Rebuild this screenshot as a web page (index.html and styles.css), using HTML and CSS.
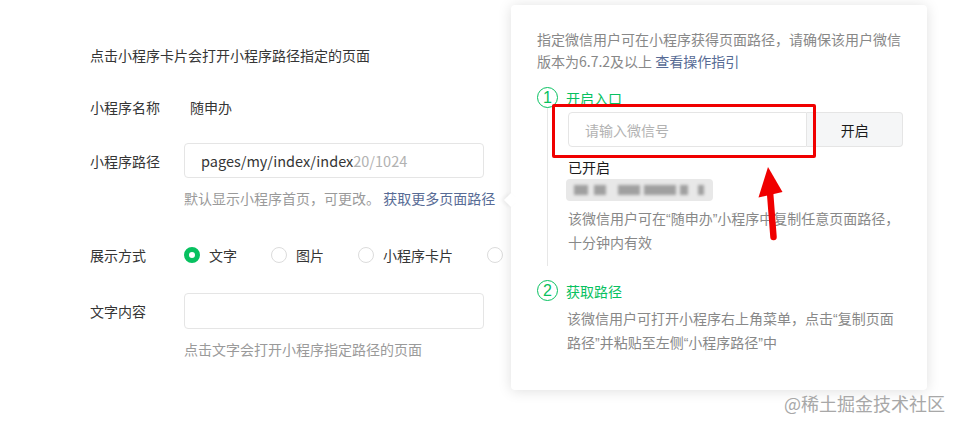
FILE: index.html
```html
<!DOCTYPE html>
<html lang="zh-CN">
<head>
  <meta charset="UTF-8">
  <meta name="viewport" content="width=device-width, initial-scale=1.0">
  <title>插入小程序</title>
  <link rel="stylesheet" href="styles.css">
</head>
<body>
  <div class="page">
    <div class="form">
      <p class="intro">点击小程序卡片会打开小程序路径指定的页面</p>

      <div class="row row-name">
        <span class="label">小程序名称</span>
        <span class="value">随申办</span>
      </div>

      <div class="row row-input">
        <span class="label">小程序路径</span>
        <div class="input">
          <span class="input-text">pages/my/index/index</span><span class="counter">20/1024</span>
        </div>
      </div>
      <p class="hint">默认显示小程序首页，可更改。 <a class="link" href="#">获取更多页面路径</a></p>

      <div class="row row-radio">
        <span class="label">展示方式</span>
        <div class="radios">
          <label class="radio checked"><i class="dot"></i>文字</label>
          <label class="radio"><i class="dot"></i>图片</label>
          <label class="radio"><i class="dot"></i>小程序卡片</label>
          <label class="radio"><i class="dot"></i>图文</label>
        </div>
      </div>

      <div class="row row-input row-text">
        <span class="label">文字内容</span>
        <div class="input"></div>
      </div>
      <p class="hint">点击文字会打开小程序指定路径的页面</p>
    </div>

    <div class="popover">
      <i class="popover-arrow"></i>
      <p class="pop-desc">指定微信用户可在小程序获得页面路径，请确保该用户微信<br>版本为6.7.2及以上 <a class="link" href="#">查看操作指引</a></p>

      <div class="step">
        <div class="step-head">
          <span class="step-num">1</span>
          <span class="step-title">开启入口</span>
        </div>
        <div class="step-body step-body-line">
          <div class="open-row">
            <div class="wx-input">请输入微信号</div>
            <button class="open-btn" type="button">开启</button>
          </div>
          <p class="opened">已开启</p>
          <div class="blurred">
            <i style="left:8px;width:14px"></i>
            <i style="left:28px;width:12px"></i>
            <i style="left:52px;width:22px"></i>
            <i style="left:78px;width:32px"></i>
            <i style="left:114px;width:8px"></i>
            <i style="left:132px;width:6px"></i>
          </div>
          <p class="step-desc">该微信用户可在<q>“</q>随申办<q>”</q>小程序中复制任意页面路径，<br>十分钟内有效</p>
        </div>
      </div>

      <div class="step step-2">
        <div class="step-head">
          <span class="step-num">2</span>
          <span class="step-title">获取路径</span>
        </div>
        <div class="step-body">
          <p class="step-desc">该微信用户可打开小程序右上角菜单，点击<q>“</q>复制页面<br>路径<q>”</q>并粘贴至左侧<q>“</q>小程序路径<q>”</q>中</p>
        </div>
      </div>
    </div>

    <div class="mark-box"></div>
    <svg class="mark-arrow" width="40" height="85" viewBox="0 0 40 85">
      <path d="M20 32 L23.5 77" stroke="#f00000" stroke-width="6.5" stroke-linecap="round" fill="none"/>
      <path d="M18 7 L8.5 37.5 L32.5 32 Z" fill="#f00000"/>
    </svg>

    <div class="watermark">@稀土掘金技术社区</div>
  </div>
</body>
</html>
```

FILE: styles.css
```css
* {
  box-sizing: border-box;
}

body {
  margin: 0;
  background: #fff;
  font-family: "Noto Sans CJK SC", "Noto Sans", sans-serif;
  font-size: 14px;
  color: #353535;
}

p {
  margin: 0;
}

q {
  quotes: none;
  font-family: "Liberation Sans", sans-serif;
}

.link {
  color: #576b95;
  text-decoration: none;
}

.page {
  position: relative;
  width: 960px;
  height: 430px;
  overflow: hidden;
}

.form {
  width: 484px;
  padding: 45px 0 0 90px;
  line-height: 20px;
}

.intro {
  margin-bottom: 32px;
}

.row {
  display: flex;
  align-items: center;
}

.label {
  width: 94px;
  flex: none;
}

.value {
  padding-left: 6px;
}

.row-input {
  margin-top: 26px;
}

.input {
  width: 300px;
  height: 35px;
  border: 1px solid #e5e5e5;
  border-radius: 4px;
  padding: 0 16px;
  display: flex;
  align-items: center;
  font-size: 14.5px;
}

.input-text {
  color: #353535;
}

.counter {
  color: #b2b2b2;
}

.row-text {
  margin-top: 28px;
}

.row-text .input {
  height: 36px;
}

.hint {
  margin: 10px 0 0 94px;
  color: #9a9a9a;
  white-space: nowrap;
}

.row-radio {
  margin-top: 37px;
}

.radios {
  display: flex;
  gap: 34px;
  white-space: nowrap;
}

.radio {
  display: flex;
  align-items: center;
  gap: 9px;
}

.dot {
  width: 16px;
  height: 16px;
  border-radius: 50%;
  border: 1px solid #dcdcdc;
  background: #fff;
}

.radio.checked .dot {
  border: 5.5px solid #07c160;
  background: #fff;
}

/* popover */
.popover {
  position: absolute;
  left: 511px;
  top: 5px;
  width: 416px;
  height: 385px;
  background: #fff;
  border-radius: 4px;
  box-shadow: 0 1px 14px rgba(0, 0, 0, 0.13);
  padding: 23px 24px 0 26px;
}

.popover-arrow {
  position: absolute;
  left: -5px;
  top: 190px;
  width: 10px;
  height: 10px;
  background: #fff;
  transform: rotate(45deg);
  box-shadow: -2px 2px 4px rgba(0, 0, 0, 0.06);
}

.pop-desc {
  line-height: 22px;
  color: #888;
  white-space: nowrap;
}

.step {
  margin-top: 15px;
}

.step-2 {
  margin-top: 14px;
}

.step-head {
  display: flex;
  align-items: center;
  gap: 8px;
  height: 21px;
}

.step-num {
  width: 21px;
  height: 21px;
  border: 1px solid #07c160;
  border-radius: 50%;
  color: #07c160;
  font-family: "Liberation Sans", sans-serif;
  font-size: 16px;
  display: flex;
  align-items: center;
  justify-content: center;
}

.step-title {
  color: #07c160;
  font-size: 14px;
}

.step-body {
  margin-left: 10px;
  padding-left: 20px;
}

.step-body-line {
  border-left: 1px solid #e7e7e7;
  padding-top: 5px;
  padding-bottom: 13px;
  margin-top: -1px;
}

.open-row {
  display: flex;
  height: 35px;
}

.wx-input {
  width: 240px;
  border: 1px solid #e5e5e5;
  border-radius: 4px 0 0 4px;
  padding: 0 16px;
  display: flex;
  align-items: center;
  color: #b2b2b2;
}

.open-btn {
  width: 96px;
  border: 1px solid #e5e5e5;
  border-left: none;
  border-radius: 0 4px 4px 0;
  background: #f5f6f7;
  font: inherit;
  color: #1a1a1a;
}

.opened {
  margin-top: 10px;
  line-height: 20px;
  color: #1a1a1a;
}

.blurred {
  position: relative;
  margin: 2px 0 0 -2px;
  width: 147px;
  height: 22px;
  border-radius: 4px;
  background: #e8e8e8;
}

.blurred i {
  position: absolute;
  top: 6px;
  height: 10px;
  background: #a0a0a0;
  filter: blur(1.5px);
}

.step-desc {
  margin-top: 6px;
  line-height: 22.5px;
  color: #888;
  white-space: nowrap;
}

.step-2 .step-body {
  margin-left: 0;
  padding-left: 30px;
}

/* annotations on the screenshot */
.mark-box {
  position: absolute;
  left: 552px;
  top: 104px;
  width: 264px;
  height: 54px;
  border: 3.5px solid #f00000;
  border-radius: 2px;
}

.mark-arrow {
  position: absolute;
  left: 750px;
  top: 160px;
}

.watermark {
  position: absolute;
  left: 784px;
  top: 391px;
  font-size: 18px;
  line-height: 24px;
  color: #a8a8a8;
}
```
